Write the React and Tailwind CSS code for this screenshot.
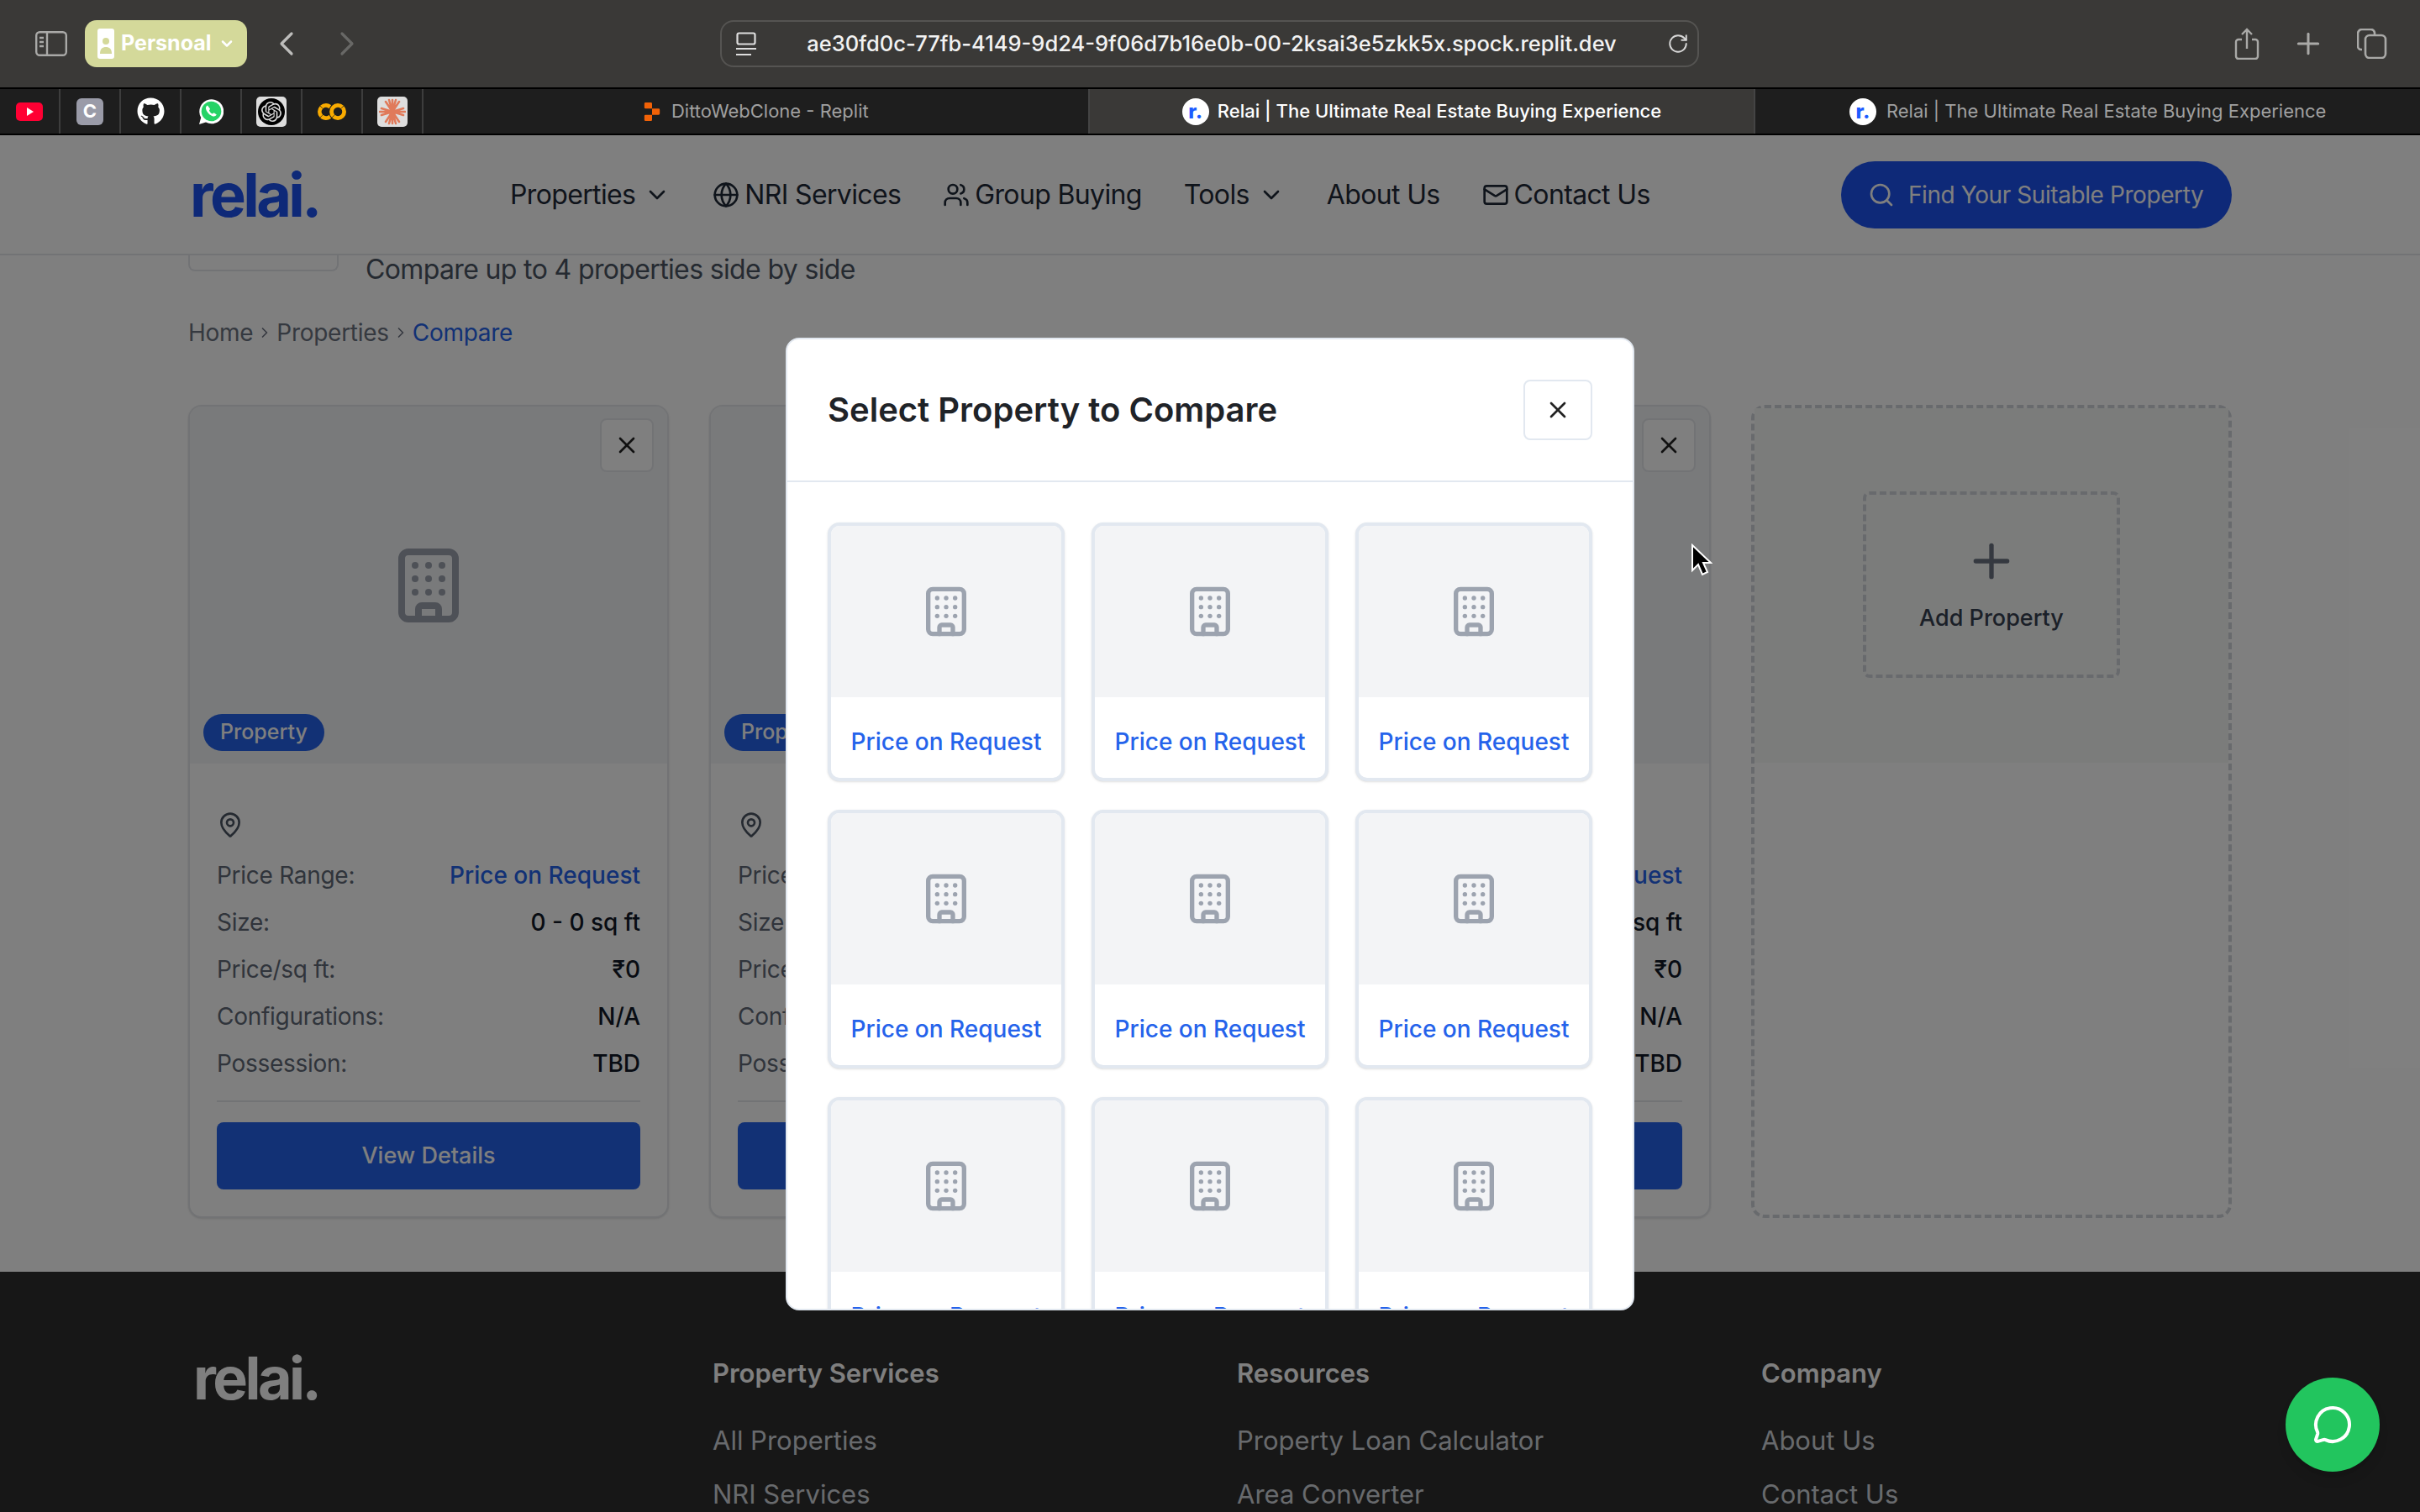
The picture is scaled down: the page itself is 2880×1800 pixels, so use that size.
import React from "react";
import {
  Building,
  ChevronDown,
  ChevronLeft,
  ChevronRight,
  Globe,
  Mail,
  MapPin,
  MessageCircle,
  Plus,
  RotateCw,
  Search,
  Users,
  X,
} from "lucide-react";
import { FaGithub } from "react-icons/fa";
import { SiGooglecolab, SiOpenai, SiReplit } from "react-icons/si";

function Favicon() {
  return (
    <span className="flex h-[32px] w-[32px] items-center justify-center rounded-full bg-white text-[24px] font-extrabold leading-none text-[#1d5cff]">
      r.
    </span>
  );
}

function PinnedTab({ children }) {
  return (
    <div className="flex h-full w-[72px] shrink-0 items-center justify-center border-r-2 border-[#3d3d3d]">
      {children}
    </div>
  );
}

function BrowserTab({ active, icon, title }) {
  return (
    <div
      className={
        active
          ? "flex h-full flex-1 items-center justify-center gap-[10px] border-x-2 border-[#444] bg-[#3a3937] text-[22px] font-medium text-white"
          : "flex h-full flex-1 items-center justify-center gap-[12px] text-[22px] text-[#a0a0a0]"
      }
    >
      {icon}
      <span>{title}</span>
    </div>
  );
}

function BrowserChrome() {
  return (
    <div className="shrink-0">
      <div className="flex h-[104px] items-center bg-[#3a3937] pl-[42px] pr-[39px]">
        <svg width="38" height="30" viewBox="0 0 38 30" fill="none" stroke="#a9a9a7" strokeWidth="2.4">
          <rect x="1.2" y="1.2" width="35.6" height="27.6" rx="4" />
          <path d="M14 1v28M5 8h5M5 13h5M5 18h5" />
        </svg>
        <div className="ml-[21px] flex h-[56px] w-[193px] items-center gap-[8px] rounded-[14px] bg-[#d4d99a] pl-[15px] text-[25px] font-bold text-white">
          <svg width="20" height="36" viewBox="0 0 20 36" fill="white">
            <path d="M3 0h14a3 3 0 0 1 3 3v30a3 3 0 0 1-3 3H3a3 3 0 0 1-3-3V3a3 3 0 0 1 3-3z" />
            <circle cx="10" cy="15" r="4" fill="#d4d99a" />
            <path d="M3 30c0-6 3-8 7-8s7 2 7 8z" fill="#d4d99a" />
          </svg>
          <span>Persnoal</span>
          <ChevronDown size={20} strokeWidth={3} />
        </div>
        <ChevronLeft size={48} strokeWidth={1.6} className="ml-[23px] text-[#bdbdbb]" />
        <ChevronRight size={48} strokeWidth={1.6} className="ml-[24px] text-[#686866]" />
        <div className="ml-[420px] flex h-[56px] w-[1165px] items-center rounded-[16px] border-2 border-[#555452] pl-[17px] pr-[10px]">
          <svg width="24" height="28" viewBox="0 0 24 28" fill="none" stroke="#dddddd" strokeWidth="2.2">
            <rect x="1.5" y="1.5" width="21" height="13" rx="2" />
            <path d="M0 20h24M0 27h18" />
          </svg>
          <span className="flex-1 text-center text-[25.5px] font-medium leading-none text-[#f2f2f2]">
            ae30fd0c-77fb-4149-9d24-9f06d7b16e0b-00-2ksai3e5zkk5x.spock.replit.dev
          </span>
          <RotateCw size={26} strokeWidth={1.8} className="text-[#d8d8d8]" />
        </div>
        <div className="ml-auto flex items-center gap-[38px] text-[#a9a9a7]">
          <svg width="30" height="38" viewBox="0 0 30 38" fill="none" stroke="currentColor" strokeWidth="2.4">
            <path d="M9 14H5a3 3 0 0 0-3 3v17a3 3 0 0 0 3 3h20a3 3 0 0 0 3-3V17a3 3 0 0 0-3-3h-4M15 25V2M9 8l6-6 6 6" />
          </svg>
          <Plus size={40} strokeWidth={1.8} />
          <svg width="36" height="36" viewBox="0 0 36 36" fill="none" stroke="currentColor" strokeWidth="2.6">
            <rect x="10" y="8" width="24" height="27" rx="5" />
            <path d="M6 25H5a4 4 0 0 1-4-4V6a5 5 0 0 1 5-5h10a5 5 0 0 1 5 4v3" />
          </svg>
        </div>
      </div>
      <div className="flex h-[57px] items-stretch border-y-2 border-black bg-[#1e1e1e]">
        <PinnedTab>
          <span className="flex h-[22px] w-[32px] items-center justify-center rounded-[5px] bg-[#ff0033]">
            <span className="ml-[2px] h-0 w-0 border-y-[5px] border-l-[8px] border-y-transparent border-l-white" />
          </span>
        </PinnedTab>
        <PinnedTab>
          <span className="flex h-[32px] w-[32px] items-center justify-center rounded-[6px] bg-[#9a9ba8] text-[22px] font-bold text-white">
            C
          </span>
        </PinnedTab>
        <PinnedTab>
          <FaGithub size={33} className="text-white" />
        </PinnedTab>
        <PinnedTab>
          <svg width="30" height="32" viewBox="0 0 30 32">
            <path d="M1 31l2.2-8A14.5 14.5 0 1 1 9 28.6z" fill="#ffffff" />
            <circle cx="15.5" cy="15.5" r="11.8" fill="#25d366" />
            <path
              d="M11 8.5c-1.5.8-2.4 2.3-1.9 4.3 1 3.9 4.3 7.4 8.2 8.6 2 .6 3.6-.3 4.5-1.8l-3.2-2.3-1.7 1.2c-1.8-.8-3.2-2.3-4-4.1l1.2-1.7z"
              fill="#ffffff"
            />
          </svg>
        </PinnedTab>
        <PinnedTab>
          <span className="flex h-[36px] w-[36px] items-center justify-center rounded-[5px] bg-[#dedede]">
            <span className="flex h-[32px] w-[32px] items-center justify-center rounded-full bg-black">
              <SiOpenai size={24} className="text-[#dddddd]" />
            </span>
          </span>
        </PinnedTab>
        <PinnedTab>
          <SiGooglecolab size={34} className="text-[#f9ab00]" />
        </PinnedTab>
        <PinnedTab>
          <span className="flex h-[36px] w-[36px] items-center justify-center rounded-[5px] bg-[#dedede]">
            <svg width="32" height="32" viewBox="0 0 32 32" stroke="#e07a5a" strokeWidth="2.6" strokeLinecap="round">
              <path d="M16 2v28M3 12l26 8M3 20l26-8M8 4l16 24M24 4L8 28M1 16h30M12 2l8 28M20 2l-8 28" />
            </svg>
          </span>
        </PinnedTab>
        <BrowserTab icon={<SiReplit size={22} className="text-[#f26207]" />} title="DittoWebClone - Replit" />
        <BrowserTab active icon={<Favicon />} title="Relai | The Ultimate Real Estate Buying Experience" />
        <BrowserTab icon={<Favicon />} title="Relai | The Ultimate Real Estate Buying Experience" />
      </div>
    </div>
  );
}

function NavItem({ icon, children, chevron }) {
  return (
    <div className="flex items-center gap-[6px]">
      {icon}
      <span>{children}</span>
      {chevron && <ChevronDown size={32} strokeWidth={2} className="ml-[4px]" />}
    </div>
  );
}

function TopNav() {
  return (
    <div className="flex h-[143px] shrink-0 items-center justify-between border-b-2 border-[#e5e7eb] bg-white pl-[226px] pr-[224px]">
      <span className="text-[72px] font-bold leading-none tracking-[-0.05em] text-[#1c52f0]">relai.</span>
      <div className="flex items-center gap-[50px] text-[32px] tracking-[-0.02em] text-[#1f2937]">
        <NavItem chevron>Properties</NavItem>
        <NavItem icon={<Globe size={32} strokeWidth={2} />}>NRI Services</NavItem>
        <NavItem icon={<Users size={32} strokeWidth={2} />}>Group Buying</NavItem>
        <NavItem chevron>Tools</NavItem>
        <NavItem>About Us</NavItem>
        <NavItem icon={<Mail size={32} strokeWidth={2} />}>Contact Us</NavItem>
      </div>
      <div className="flex h-[80px] w-[465px] items-center gap-[16px] rounded-full bg-[#1c52f0] pl-[32px] text-[28px] tracking-[-0.015em] text-white">
        <Search size={32} strokeWidth={2} />
        <span>Find Your Suitable Property</span>
      </div>
    </div>
  );
}

function StatRow({ label, value, accent }) {
  return (
    <div className="flex h-[56px] items-center justify-between text-[28px]">
      <span className="tracking-[-0.01em] text-[#606977]">{label}</span>
      <span className={accent ? "font-medium text-[#2563eb]" : "font-medium text-[#111827]"}>{value}</span>
    </div>
  );
}

function PropertyCard() {
  return (
    <div className="overflow-hidden rounded-[16px] border-2 border-[#e5e7eb] bg-white shadow-sm">
      <div className="relative flex h-[425px] items-center justify-center bg-[#f3f4f6]">
        <Building size={96} strokeWidth={2} className="text-[#9ca3af]" />
        <button className="absolute right-[16px] top-[14px] flex h-[64px] w-[64px] items-center justify-center rounded-[8px] border-2 border-[#e5e7eb] bg-white text-[#222]">
          <X size={32} strokeWidth={2} />
        </button>
        <span className="absolute bottom-[15px] left-[16px] flex h-[44px] w-[144px] items-center justify-center rounded-full bg-[#2563eb] text-[25px] font-medium text-white">
          Property
        </span>
      </div>
      <div className="px-[32px] pb-[32px] pt-[57px]">
        <MapPin size={32} strokeWidth={2} className="text-[#4b5563]" />
        <div className="mt-[16px]">
          <StatRow label="Price Range:" value="Price on Request" accent />
          <StatRow label="Size:" value="0 - 0 sq ft" />
          <StatRow label="Price/sq ft:" value="₹0" />
          <StatRow label="Configurations:" value="N/A" />
          <StatRow label="Possession:" value="TBD" />
        </div>
        <div className="mt-[16px] border-t-2 border-[#e5e7eb] pt-[24px]">
          <button className="h-[80px] w-full rounded-[8px] bg-[#2563eb] text-[27px] font-medium text-white">
            View Details
          </button>
        </div>
      </div>
    </div>
  );
}

function AddCard() {
  return (
    <div className="rounded-[16px] border-4 border-dashed border-[#d1d5db] bg-white">
      <div className="flex h-[422px] items-center justify-center bg-[#f7f8f7] pb-[2px]">
        <div className="flex h-[222px] w-[306px] flex-col items-center rounded-[8px] border-4 border-dashed border-[#d1d5db] pt-[47px] text-[#374151]">
          <Plus size={64} strokeWidth={2} className="text-[#6b7280]" />
          <span className="mt-[16px] text-[27px] font-medium leading-[40px]">Add Property</span>
        </div>
      </div>
    </div>
  );
}

function MainContent() {
  return (
    <div className="flex h-[1210px] shrink-0 flex-col bg-white px-[224px]">
      <div className="flex h-[34px] gap-[32px]">
        <div className="h-[19px] w-[179px] rounded-b-[8px] border-x-2 border-b-2 border-[#e5e7eb]" />
        <span className="text-[32px] leading-[34px] tracking-[-0.02em] text-[#4b5563]">
          Compare up to 4 properties side by side
        </span>
      </div>
      <div className="mt-[40px] flex h-[36px] items-center text-[28px] tracking-[-0.01em] text-[#6b7280]">
        <span>Home</span>
        <ChevronRight size={20} className="mx-[4px]" />
        <span>Properties</span>
        <ChevronRight size={20} className="mx-[4px]" />
        <span className="text-[#2563eb]">Compare</span>
      </div>
      <div className="mt-[68px] grid h-[968px] grid-cols-4 gap-[48px]">
        <PropertyCard />
        <PropertyCard />
        <PropertyCard />
        <AddCard />
      </div>
    </div>
  );
}

function FooterColumn({ title, links }) {
  return (
    <div>
      <div className="text-[31px] font-semibold leading-[48px] text-white">{title}</div>
      <div className="mt-[32px] flex flex-col gap-[16px]">
        {links.map((link) => (
          <span key={link} className="text-[31px] leading-[48px] text-[#d1d5db]">
            {link}
          </span>
        ))}
      </div>
    </div>
  );
}

function Footer() {
  return (
    <div className="grid flex-1 grid-cols-4 gap-[64px] bg-[#2e2e2e] px-[224px] pt-[97px]">
      <span className="pl-[6px] text-[70px] font-bold leading-[60px] tracking-[-0.05em] text-white">relai.</span>
      <FooterColumn title="Property Services" links={["All Properties", "NRI Services"]} />
      <FooterColumn title="Resources" links={["Property Loan Calculator", "Area Converter"]} />
      <FooterColumn title="Company" links={["About Us", "Contact Us"]} />
    </div>
  );
}

function PickCard() {
  return (
    <div className="h-[308px] overflow-hidden rounded-[14px] border-4 border-[#e2e8f0] bg-white shadow-sm">
      <div className="flex h-[204px] items-center justify-center bg-[#f3f4f6]">
        <Building size={64} strokeWidth={2} className="text-[#9ca3af]" />
      </div>
      <div className="pt-[33px] text-center text-[28px] font-medium leading-[40px] text-[#2563eb]">
        Price on Request
      </div>
    </div>
  );
}

function SelectModal() {
  return (
    <div className="flex h-[1158px] w-[1010px] flex-col overflow-hidden rounded-[16px] border-2 border-[#e2e8f0] bg-white">
      <div className="flex h-[170px] shrink-0 items-center justify-between border-b-2 border-[#e2e8f0] px-[48px]">
        <span className="text-[40px] font-semibold text-[#1f2328]">Select Property to Compare</span>
        <button className="flex h-[72px] w-[82px] items-center justify-center rounded-[8px] border-2 border-[#e2e8f0] bg-white text-[#222]">
          <X size={32} strokeWidth={2} />
        </button>
      </div>
      <div className="grid grid-cols-3 gap-x-[32px] gap-y-[34px] overflow-hidden px-[48px] pt-[48px]">
        {[1, 2, 3, 4, 5, 6, 7, 8, 9].map((n) => (
          <PickCard key={n} />
        ))}
      </div>
    </div>
  );
}

export default function App() {
  return (
    <div className="flex h-[1800px] w-[2880px] flex-col overflow-hidden font-['Inter',sans-serif]">
      <BrowserChrome />
      <div className="relative flex flex-1 flex-col overflow-hidden">
        <TopNav />
        <MainContent />
        <Footer />
        <div className="absolute inset-0 flex items-center justify-center bg-black/50">
          <SelectModal />
        </div>
        <button className="absolute left-[2720px] top-[1479px] flex h-[112px] w-[112px] items-center justify-center rounded-full bg-[#22c55e] text-white shadow-lg">
          <MessageCircle size={48} strokeWidth={2} />
        </button>
        <svg className="absolute left-[2012px] top-[486px]" width="26" height="40" viewBox="0 0 26 40">
          <path d="M2 2v30l7-7 5 12 6-3-5-11h9z" fill="#000" stroke="#fff" strokeWidth="2" />
        </svg>
      </div>
    </div>
  );
}
